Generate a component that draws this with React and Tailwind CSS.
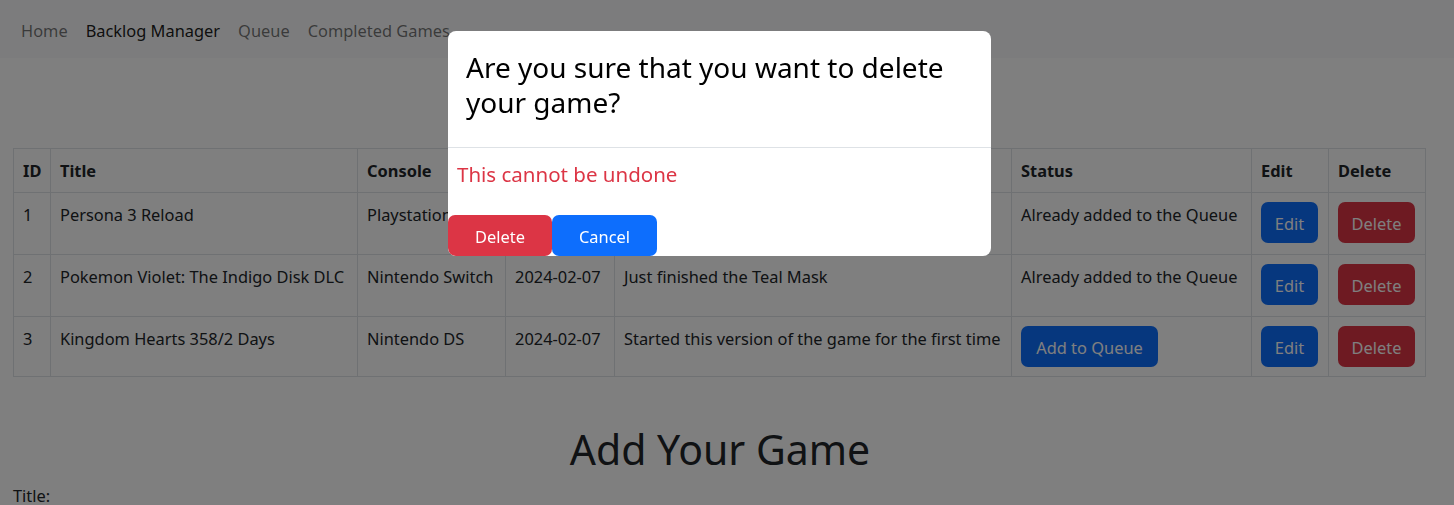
import React from 'react';

const games = [
  {id: 1, title: 'Persona 3 Reload', console: 'Playstation 5', date: '2024-02-07', notes: 'Just started the game', queued: true},
  {id: 2, title: 'Pokemon Violet: The Indigo Disk DLC', console: 'Nintendo Switch', date: '2024-02-07', notes: 'Just finished the Teal Mask', queued: true},
  {id: 3, title: 'Kingdom Hearts 358/2 Days', console: 'Nintendo DS', date: '2024-02-07', notes: 'Started this version of the game for the first time', queued: false},
];

const cell = 'border border-[#dee2e6] px-[9px] pt-[9px] align-top text-left';

const NavBar = () => (
  <nav className="h-[58px] bg-[#f8f9fa] flex items-start pt-[18px] pl-[12px] leading-[26px]">
    <a className="px-[9px] text-[rgba(0,0,0,0.55)]">Home</a>
    <a className="px-[9px] text-[rgba(0,0,0,0.9)]">Backlog Manager</a>
    <a className="px-[9px] text-[rgba(0,0,0,0.55)]">Queue</a>
    <a className="px-[9px] text-[rgba(0,0,0,0.55)]">Completed Games</a>
  </nav>
);

const GameTable = () => (
  <table className="table-fixed border-collapse w-[1412px] ml-[13px] mt-[90px] leading-[26px]">
    <thead>
      <tr className="h-[44px]">
        <th className={`${cell} w-[37px] font-bold`}>ID</th>
        <th className={`${cell} w-[307px] font-bold`}>Title</th>
        <th className={`${cell} w-[148px] font-bold`}>Console</th>
        <th className={`${cell} w-[109px] font-bold`}>Date</th>
        <th className={`${cell} w-[397px] font-bold`}>Notes</th>
        <th className={`${cell} w-[240px] font-bold`}>Status</th>
        <th className={`${cell} w-[77px] font-bold`}>Edit</th>
        <th className={`${cell} w-[97px] font-bold`}>Delete</th>
      </tr>
    </thead>
    <tbody>
      {games.map((game, i) => (
        <tr key={game.id} className={i === 2 ? 'h-[60px]' : 'h-[62px]'}>
          <td className={cell}>{game.id}</td>
          <td className={cell}>{game.title}</td>
          <td className={cell}>{game.console}</td>
          <td className={cell}>{game.date}</td>
          <td className={cell}>{game.notes}</td>
          <td className={cell}>
            {game.queued ? (
              'Already added to the Queue'
            ) : (
              <button className="w-[137px] h-[41px] pt-[2px] rounded-[7px] bg-[#0d6efd] text-white">
                Add to Queue
              </button>
            )}
          </td>
          <td className={cell}>
            <button className="w-[57px] h-[41px] pt-[2px] rounded-[7px] bg-[#0d6efd] text-white">Edit</button>
          </td>
          <td className={cell}>
            <button className="w-[77px] h-[41px] pt-[2px] rounded-[7px] bg-[#dc3545] text-white">Delete</button>
          </td>
        </tr>
      ))}
    </tbody>
  </table>
);

const DeleteModal = () => (
  <div className="fixed left-[448px] top-[31px] w-[543px] h-[225px] bg-white rounded-[8px] flex flex-col overflow-hidden">
    <div className="h-[117px] border-b border-[#dee2e6] pt-[19px] pl-[18px]">
      <h3 className="text-[28px] leading-[35px] text-black whitespace-nowrap">
        Are you sure that you want to delete
        <br />
        your game?
      </h3>
    </div>
    <div className="pt-[14px] pl-[9px]">
      <h5 className="text-[20.5px] leading-[25px] text-[#dc3545]">This cannot be undone</h5>
    </div>
    <div className="mt-auto flex">
      <button className="w-[104px] h-[41px] pt-[3px] rounded-[7px] bg-[#dc3545] text-white">Delete</button>
      <button className="w-[105px] h-[41px] pt-[3px] rounded-[7px] bg-[#0d6efd] text-white">Cancel</button>
    </div>
  </div>
);

const App = () => {
  return (
    <div className="min-h-screen bg-white text-[#212529] text-[16.4px] font-['Noto_Sans',sans-serif]">
      <NavBar />
      <GameTable />
      <h1 className="mt-[48px] pr-[14px] text-center text-[41px] leading-[49px]">Add Your Game</h1>
      <div className="mt-[9px] ml-[13px] leading-[26px]">
        <label>Title:</label>
      </div>
      <div className="fixed inset-0 bg-black/50"></div>
      <DeleteModal />
    </div>
  );
};

export default App;
